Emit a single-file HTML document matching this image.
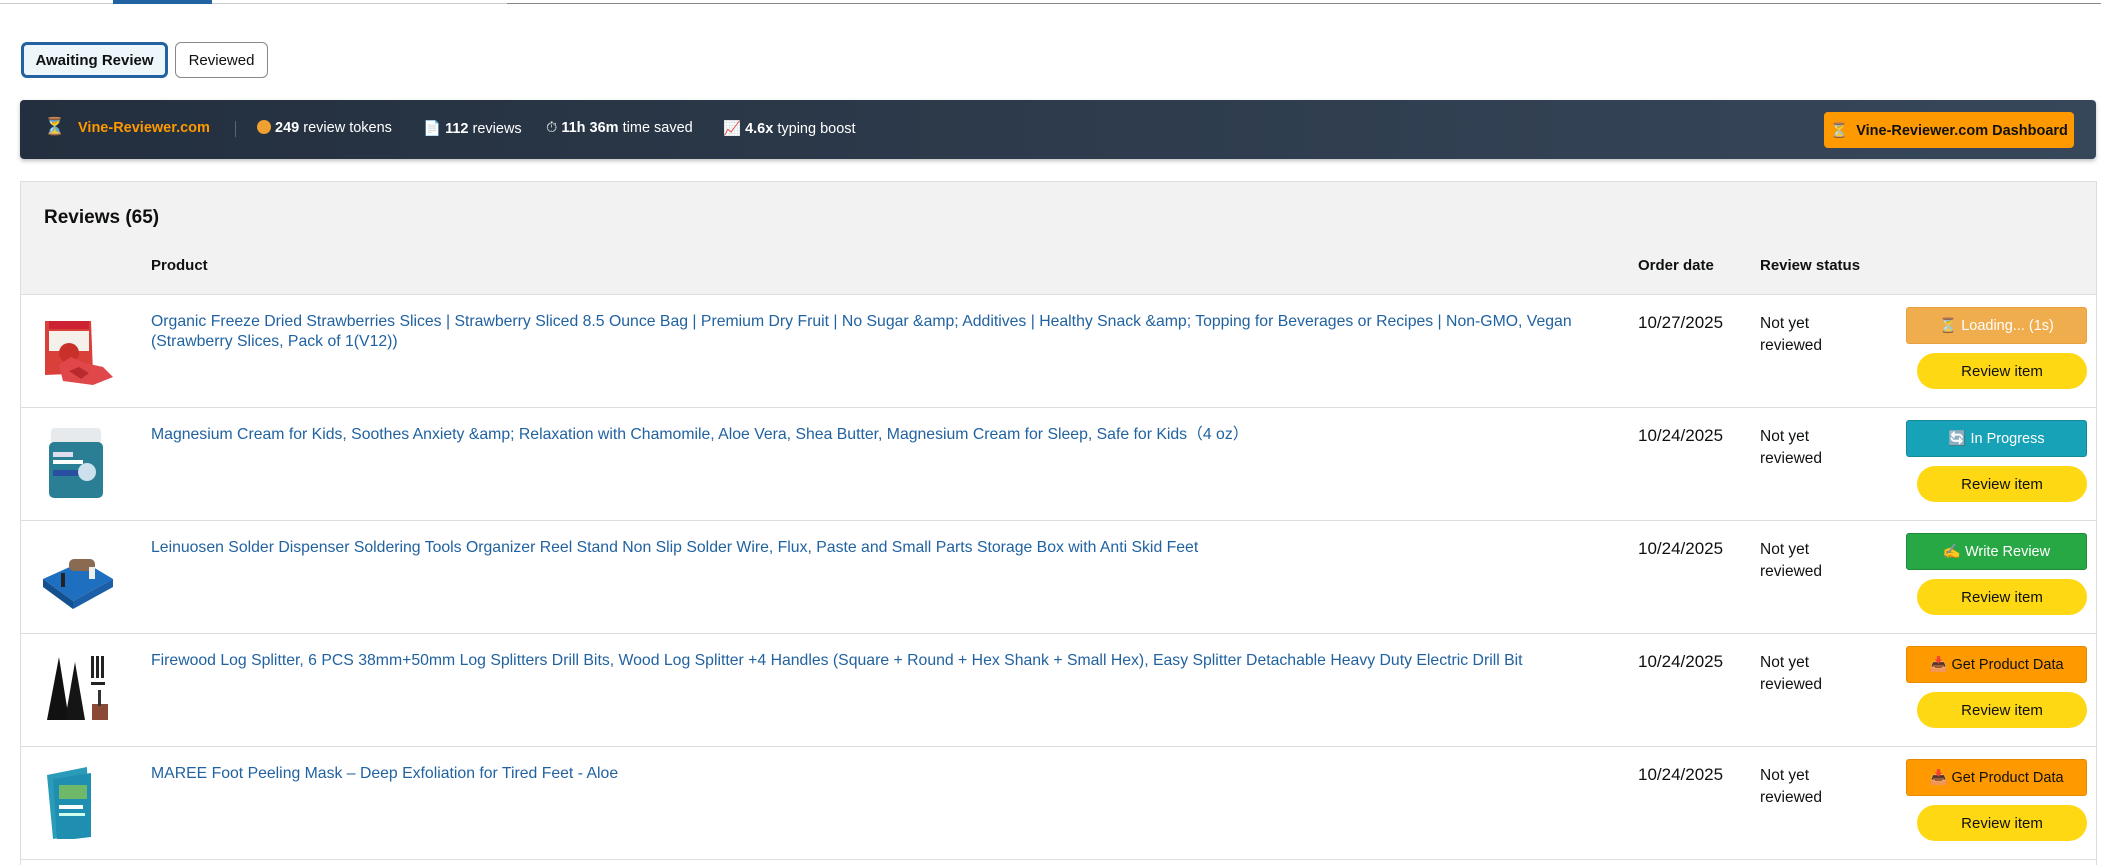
<!DOCTYPE html>
<html style="overflow:hidden;height:865px"><head><meta charset="utf-8"><style>
*{box-sizing:border-box;margin:0;padding:0}
body{width:2101px;height:865px;overflow:hidden;background:#fff;font-family:"Liberation Sans",sans-serif;color:#0f1111;position:relative}
.abs{position:absolute}
.tab{position:absolute;top:42px;height:36px;border-radius:6px;font-size:15px;display:flex;align-items:center;justify-content:center}
.banner{position:absolute;left:20px;top:100px;width:2076px;height:59px;border-radius:4px;background:linear-gradient(90deg,#232f3e,#37475a);box-shadow:0 2px 4px rgba(0,0,0,.25)}
.bt{position:absolute;top:20px;font-size:14.5px;color:#fff;white-space:nowrap}
.bt b{font-weight:bold}
.cont{position:absolute;left:20px;top:181px;width:2077px;height:690px;border:1px solid #ddd}
.hdr{position:absolute;left:0;top:0;width:100%;height:113px;background:#f2f2f2;border-bottom:1px solid #ddd}
.row{position:absolute;left:0;width:100%;height:113px;border-bottom:1px solid #ddd}
.ptxt{position:absolute;left:130px;top:17px;width:1440px;font-size:15.8px;line-height:20px;color:#2162a1}
.date{position:absolute;left:1617px;top:18px;font-size:17px}
.stat{position:absolute;left:1739px;top:18px;font-size:15.5px;line-height:22px}
.b1{position:absolute;left:1885px;top:12px;width:181px;height:37px;border-radius:3px;font-size:14.5px;display:flex;align-items:center;justify-content:center;gap:6px}
.b2{position:absolute;left:1896px;top:58px;width:170px;height:36px;border-radius:18px;background:#ffd814;font-size:15px;display:flex;align-items:center;justify-content:center}
.img{position:absolute;left:18px;top:18px;width:78px;height:74px}
</style></head><body>
<div class="abs" style="left:0;top:3px;width:507px;height:1px;background:#ccc"></div>
<div class="abs" style="left:507px;top:3px;width:1594px;height:1px;background:#888"></div>
<div class="abs" style="left:113px;top:0;width:99px;height:4px;background:#2162a1"></div>

<div class="tab" style="left:21px;width:147px;border:3px solid #2162a1;background:#edf6fb;font-weight:bold">Awaiting Review</div>
<div class="tab" style="left:175px;width:93px;border:1px solid #888;background:#fff">Reviewed</div>

<div class="banner">
 <div class="bt" style="left:24px;top:17px;font-size:17px">⏳</div>
 <div class="bt" style="left:58px;color:#ff9900;font-weight:bold">Vine-Reviewer.com</div>
 <div class="abs" style="left:215px;top:21px;width:1px;height:16px;background:#5a6675"></div>
 <div class="bt" style="left:237px"><span style="display:inline-block;width:14px;height:14px;border-radius:50%;background:#f0a030;vertical-align:-2px"></span> <b>249</b> review tokens</div>
 <div class="bt" style="left:403px">📄 <b>112</b> reviews</div>
 <div class="bt" style="left:526px">⏱ <b>11h 36m</b> time saved</div>
 <div class="bt" style="left:703px">📈 <b>4.6x</b> typing boost</div>
 <div class="abs" style="left:1804px;top:12px;width:250px;height:36px;border-radius:4px;background:#ff9900;font-size:14.5px;font-weight:bold;display:flex;align-items:center;justify-content:center;color:#111">⏳&nbsp; Vine-Reviewer.com Dashboard</div>
</div>

<div class="cont">
 <div class="hdr">
  <div class="abs" style="left:23px;top:25px;font-size:19px;font-weight:bold">Reviews (65)</div>
  <div class="abs" style="left:130px;top:75px;font-size:15px;font-weight:bold">Product</div>
  <div class="abs" style="left:1617px;top:75px;font-size:15px;font-weight:bold">Order date</div>
  <div class="abs" style="left:1739px;top:75px;font-size:15px;font-weight:bold">Review status</div>
 </div>

 <div class="row" style="top:113px">
  <div class="img"><svg width="78" height="74"><path d="M6 8 L52 8 L54 60 L6 62 Z" fill="#d9403a"/><rect x="10" y="8" width="40" height="8" fill="#c23"/><path d="M10 18 h40 v20 h-40z" fill="#f4f0ea"/><circle cx="30" cy="40" r="10" fill="#c8302a"/><path d="M20 52 l12-8 l14 6 l18 4 l10 10 l-20 8 l-30 -4z" fill="#e0474a"/><path d="M30 58 l10-4 l10 6 l-8 6z" fill="#b92a2e"/></svg></div>
  <div class="ptxt">Organic Freeze Dried Strawberries Slices | Strawberry Sliced 8.5 Ounce Bag | Premium Dry Fruit | No Sugar &amp;amp; Additives | Healthy Snack &amp;amp; Topping for Beverages or Recipes | Non-GMO, Vegan<br>(Strawberry Slices, Pack of 1(V12))</div>
  <div class="date">10/27/2025</div>
  <div class="stat">Not yet<br>reviewed</div>
  <div class="b1" style="background:#f0ad4e;color:#fff;border:1px solid #e8a040">⏳ Loading... (1s)</div>
  <div class="b2">Review item</div>
 </div>

 <div class="row" style="top:226px">
  <div class="img"><svg width="78" height="74"><rect x="12" y="2" width="50" height="16" rx="4" fill="#e6eaec"/><rect x="10" y="16" width="54" height="56" rx="5" fill="#2a7f95"/><rect x="14" y="26" width="20" height="5" fill="#dde"/><rect x="14" y="34" width="30" height="4" fill="#fff"/><rect x="14" y="44" width="28" height="6" fill="#2a4fa0"/><circle cx="48" cy="46" r="9" fill="#cde0ee"/></svg></div>
  <div class="ptxt">Magnesium Cream for Kids, Soothes Anxiety &amp;amp; Relaxation with Chamomile, Aloe Vera, Shea Butter, Magnesium Cream for Sleep, Safe for Kids（4 oz）</div>
  <div class="date">10/24/2025</div>
  <div class="stat">Not yet<br>reviewed</div>
  <div class="b1" style="background:#17a2b8;color:#fff;border:1px solid #138a9c">🔄 In Progress</div>
  <div class="b2">Review item</div>
 </div>

 <div class="row" style="top:339px">
  <div class="img"><svg width="78" height="74"><path d="M4 40 L44 22 L74 40 L34 62 Z" fill="#1f6fc0"/><path d="M4 40 L34 62 L34 70 L4 48 Z" fill="#14508e"/><path d="M34 62 L74 40 L74 48 L34 70Z" fill="#1a5fa8"/><rect x="30" y="20" width="26" height="12" rx="5" fill="#8a6a50"/><rect x="22" y="34" width="4" height="14" fill="#222"/><rect x="50" y="28" width="6" height="12" fill="#eee"/></svg></div>
  <div class="ptxt">Leinuosen Solder Dispenser Soldering Tools Organizer Reel Stand Non Slip Solder Wire, Flux, Paste and Small Parts Storage Box with Anti Skid Feet</div>
  <div class="date">10/24/2025</div>
  <div class="stat">Not yet<br>reviewed</div>
  <div class="b1" style="background:#28a745;color:#fff;border:1px solid #1f8a38">✍ Write Review</div>
  <div class="b2">Review item</div>
 </div>

 <div class="row" style="top:452px">
  <div class="img"><svg width="78" height="74"><path d="M20 5 L30 68 L8 68 Z" fill="#111"/><path d="M36 10 L46 68 L26 68 Z" fill="#151515"/><rect x="52" y="4" width="3" height="22" fill="#222"/><rect x="57" y="4" width="3" height="22" fill="#222"/><rect x="62" y="4" width="3" height="22" fill="#222"/><rect x="52" y="30" width="14" height="3" fill="#222"/><rect x="53" y="52" width="16" height="16" fill="#8a4a36"/><rect x="59" y="38" width="3" height="16" fill="#333"/></svg></div>
  <div class="ptxt">Firewood Log Splitter, 6 PCS 38mm+50mm Log Splitters Drill Bits, Wood Log Splitter +4 Handles (Square + Round + Hex Shank + Small Hex), Easy Splitter Detachable Heavy Duty Electric Drill Bit</div>
  <div class="date">10/24/2025</div>
  <div class="stat">Not yet<br>reviewed</div>
  <div class="b1" style="background:#ff9900;color:#111;border:1px solid #e68a00">📥 Get Product Data</div>
  <div class="b2">Review item</div>
 </div>

 <div class="row" style="top:565px">
  <div class="img"><svg width="78" height="74"><path d="M8 10 L48 2 L50 68 L14 74 Z" fill="#2a9bb8"/><path d="M14 14 L52 8 L52 72 L18 76 Z" fill="#1e8fb0"/><rect x="20" y="20" width="28" height="14" fill="#6fb86a"/><rect x="20" y="40" width="24" height="4" fill="#fff"/><rect x="20" y="48" width="26" height="3" fill="#cfe"/></svg></div>
  <div class="ptxt">MAREE Foot Peeling Mask – Deep Exfoliation for Tired Feet - Aloe</div>
  <div class="date">10/24/2025</div>
  <div class="stat">Not yet<br>reviewed</div>
  <div class="b1" style="background:#ff9900;color:#111;border:1px solid #e68a00">📥 Get Product Data</div>
  <div class="b2">Review item</div>
 </div>
</div>
</body></html>
